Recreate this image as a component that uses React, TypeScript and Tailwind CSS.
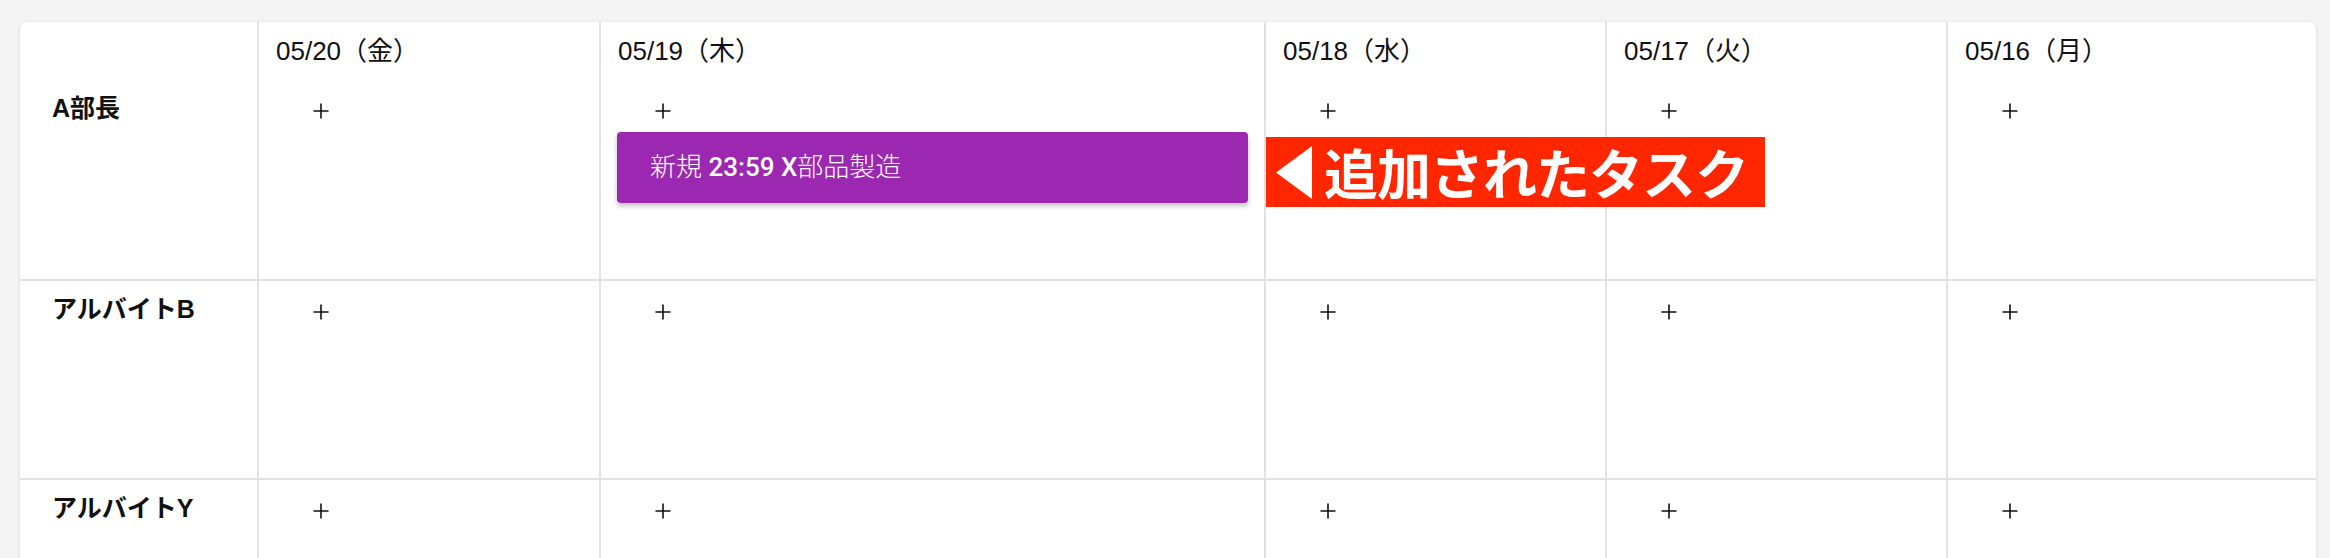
const dates = ['05/20（金）', '05/19（木）', '05/18（水）', '05/17（火）', '05/16（月）'];
const members = ['A部長', 'アルバイトB', 'アルバイトY'];

const font = "font-['Liberation_Sans','Noto_Sans_CJK_JP',sans-serif]";

function Plus() {
  return (
    <svg width="16" height="16" viewBox="0 0 16 16" className="ml-[38px] mt-[11px] block">
      <path d="M8 0.5V15.5M0.5 8H15.5" stroke="#111" strokeWidth="1.6" />
    </svg>
  );
}

function TaskCard() {
  return (
    <div className="mt-[13px] h-[71px] rounded-[4px] bg-[#9c27b0] px-[33px] flex items-center text-white text-[26px] shadow-[0_3px_5px_rgba(0,0,0,0.25)]">
      <span className="font-light">新規</span>
      <span className="font-medium font-['Roboto','Noto_Sans_CJK_JP',sans-serif]">&nbsp;23:59 X</span>
      <span className="font-light">部品製造</span>
    </div>
  );
}

export default function App() {
  return (
    <div className={`h-[558px] overflow-hidden bg-[#f4f4f4] pt-[22px] pl-[20px] pr-[14px] ${font}`}>
      <div className="relative bg-white rounded-[8px] shadow-[0_1px_4px_rgba(0,0,0,0.12)] overflow-hidden">
        <div className="grid grid-cols-[239px_342px_665px_341px_341px_1fr]">
          {/* header row */}
          <div className="h-[58px] border-r-2 border-[#e2e2e2]" />
          {dates.map((d, i) => (
            <div
              key={d}
              className={`h-[58px] pt-4 pl-[17px] text-[26px] leading-[26px] text-[#111] ${i < dates.length - 1 ? 'border-r-2 border-[#e2e2e2]' : ''}`}
            >
              {d}
            </div>
          ))}

          {/* member rows */}
          {members.map((m, r) => (
            <div key={m} className="contents">
              <div
                className={`h-[199px] border-r-2 border-[#e2e2e2] pl-[32px] pt-[12px] text-[25px] leading-[32px] font-bold text-[#111] ${r > 0 ? 'border-t-2' : ''}`}
              >
                {m}
              </div>
              {dates.map((d, i) => (
                <div
                  key={d}
                  className={`h-[199px] px-4 pt-[12px] border-[#e2e2e2] ${i < dates.length - 1 ? 'border-r-2' : ''} ${r > 0 ? 'border-t-2' : ''}`}
                >
                  <Plus />
                  {r === 0 && i === 1 && <TaskCard />}
                </div>
              ))}
            </div>
          ))}
        </div>

        {/* annotation overlay */}
        <div className="absolute left-[1246px] top-[115px] w-[499px] h-[70px] bg-[#ff2600] flex items-center pl-[10px] gap-[12px] font-['Noto_Sans_CJK_JP',sans-serif]">
          <svg width="36" height="53" viewBox="0 0 36 53" className="block">
            <path d="M36 0V53L0 26.5Z" fill="#fff" />
          </svg>
          <span className="text-white text-[54px] leading-none font-bold tracking-[-1px]">追加されたタスク</span>
        </div>
      </div>
    </div>
  );
}
